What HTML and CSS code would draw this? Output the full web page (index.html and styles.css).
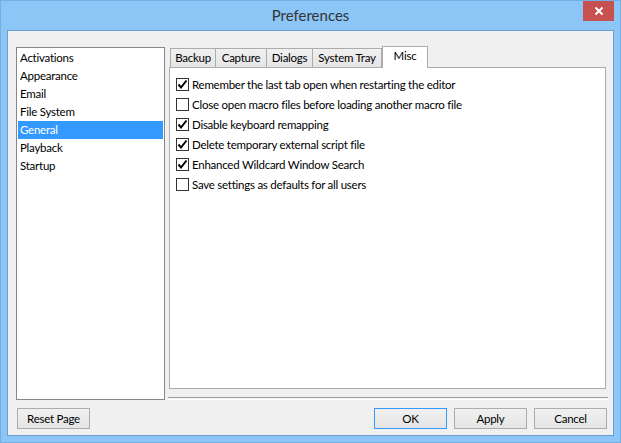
FILE: index.html
```html
<!DOCTYPE html>
<html>
<head>
<meta charset="utf-8">
<link rel="stylesheet" href="styles.css">
</head>
<body>
<div class="window">
  <div class="titlebar">
    <div class="title">Preferences</div>
    <div class="close"><svg width="10" height="10" viewBox="0 0 10 10"><path d="M1.5 1.5 L8.5 8.5 M8.5 1.5 L1.5 8.5" stroke="#fff" stroke-width="2"/></svg></div>
  </div>
  <div class="client">
    <div class="main">
      <div class="listbox">
        <div class="item">Activations</div>
        <div class="item">Appearance</div>
        <div class="item">Email</div>
        <div class="item">File System</div>
        <div class="item selected">General</div>
        <div class="item">Playback</div>
        <div class="item">Startup</div>
      </div>
      <div class="right">
        <div class="tabs">
          <div class="tab t-backup">Backup</div>
          <div class="tab t-capture">Capture</div>
          <div class="tab t-dialogs">Dialogs</div>
          <div class="tab t-tray">System Tray</div>
          <div class="tab active t-misc">Misc</div>
        </div>
        <div class="panel">
          <div class="row"><span class="cb"><svg width="11" height="11" viewBox="0 0 11 11"><path d="M1.5 5.5 L4 8.5 L9.5 1.5" fill="none" stroke="#000" stroke-width="2"/></svg></span><span>Remember the last tab open when restarting the editor</span></div>
          <div class="row"><span class="cb"></span><span>Close open macro files before loading another macro file</span></div>
          <div class="row"><span class="cb"><svg width="11" height="11" viewBox="0 0 11 11"><path d="M1.5 5.5 L4 8.5 L9.5 1.5" fill="none" stroke="#000" stroke-width="2"/></svg></span><span>Disable keyboard remapping</span></div>
          <div class="row"><span class="cb"><svg width="11" height="11" viewBox="0 0 11 11"><path d="M1.5 5.5 L4 8.5 L9.5 1.5" fill="none" stroke="#000" stroke-width="2"/></svg></span><span>Delete temporary external script file</span></div>
          <div class="row"><span class="cb"><svg width="11" height="11" viewBox="0 0 11 11"><path d="M1.5 5.5 L4 8.5 L9.5 1.5" fill="none" stroke="#000" stroke-width="2"/></svg></span><span>Enhanced Wildcard Window Search</span></div>
          <div class="row"><span class="cb"></span><span>Save settings as defaults for all users</span></div>
        </div>
        <div class="separator"></div>
      </div>
    </div>
    <div class="buttons">
      <div class="btn">Reset Page</div>
      <div class="spacer"></div>
      <div class="btn default">OK</div>
      <div class="btn">Apply</div>
      <div class="btn">Cancel</div>
    </div>
  </div>
</div>
</body>
</html>
```

FILE: styles.css
```css
html, body {
  margin: 0;
  padding: 0;
}
body {
  width: 621px;
  height: 443px;
  overflow: hidden;
  font-family: Lato, "Liberation Sans", Arial, sans-serif;
  font-size: 11.5px;
  letter-spacing: -0.25px;
  color: #000;
}
.window {
  box-sizing: border-box;
  width: 621px;
  height: 443px;
  background: #8bc6f7;
  border: 1px solid #74aee6;
  display: flex;
  flex-direction: column;
}
.titlebar {
  height: 29px;
  display: flex;
  align-items: flex-start;
  justify-content: center;
  position: relative;
}
.title {
  font-family: Lato, "Liberation Sans", sans-serif;
  font-size: 15px;
  letter-spacing: 0;
  color: #333;
  margin-top: 5px;
}
.close {
  position: absolute;
  right: 6px;
  top: 0;
  width: 31px;
  height: 20px;
  background: #c75050;
  display: flex;
  align-items: center;
  justify-content: center;
}
.client {
  box-sizing: border-box;
  margin: 0 6px 0 6px;
  height: 406px;
  background: #f0f0f0;
  border: 1px solid #6d9ccf;
  padding: 16px 0 0 8px;
  display: flex;
  flex-direction: column;
}
.main {
  display: flex;
  height: 353px;
}
.listbox {
  box-sizing: border-box;
  width: 149px;
  height: 353px;
  background: #fff;
  border: 1px solid #828790;
  padding: 1px;
}
.item {
  height: 18px;
  line-height: 18px;
  padding-left: 2px;
}
.item.selected {
  background: #3399ff;
  color: #fff;
}
.right {
  margin-left: 4px;
  width: 440px;
  display: flex;
  flex-direction: column;
}
.tabs {
  display: flex;
  align-items: flex-end;
  height: 20px;
  padding-left: 1px;
}
.tab {
  box-sizing: border-box;
  height: 19px;
  line-height: 17px;
  border: 1px solid #acacac;
  border-bottom: none;
  background: linear-gradient(#f0f0f0, #e5e5e5);
  text-align: center;
  margin-right: -1px;
}
.t-backup { width: 46px; }
.t-capture { width: 52px; }
.t-dialogs { width: 47px; }
.t-tray { width: 70px; }
.t-misc { width: 46px; }
.tab.active {
  height: 22px;
  line-height: 17px;
  background: #fff;
  margin-bottom: -1px;
  margin-left: 1px;
  position: relative;
  z-index: 1;
}
.panel {
  box-sizing: border-box;
  width: 437px;
  height: 323px;
  background: #fff;
  border: 1px solid #acacac;
  padding: 6px 0 0 6px;
}
.row {
  height: 20px;
  display: flex;
  align-items: center;
}
.cb {
  box-sizing: border-box;
  width: 13px;
  height: 13px;
  border: 1px solid #333;
  background: #fff;
  margin-right: 3px;
  display: flex;
  align-items: center;
  justify-content: center;
  flex: none;
}
.cb svg { display: block; }
.separator {
  margin-top: 8px;
  margin-left: -1px;
  width: 440px;
  height: 1px;
  border-top: 1px solid #a0a0a0;
  border-bottom: 1px solid #fff;
}
.buttons {
  display: flex;
  margin-top: 8px;
  padding-left: 1px;
  padding-right: 6px;
}
.spacer { flex: 1; }
.btn {
  box-sizing: border-box;
  width: 73px;
  height: 21px;
  line-height: 19px;
  text-align: center;
  border: 1px solid #acacac;
  background: linear-gradient(#f0f0f0, #e5e5e5);
  margin-left: 7px;
}
.btn:first-child { margin-left: 0; }
.btn.default {
  border-color: #3399ff;
}
```
